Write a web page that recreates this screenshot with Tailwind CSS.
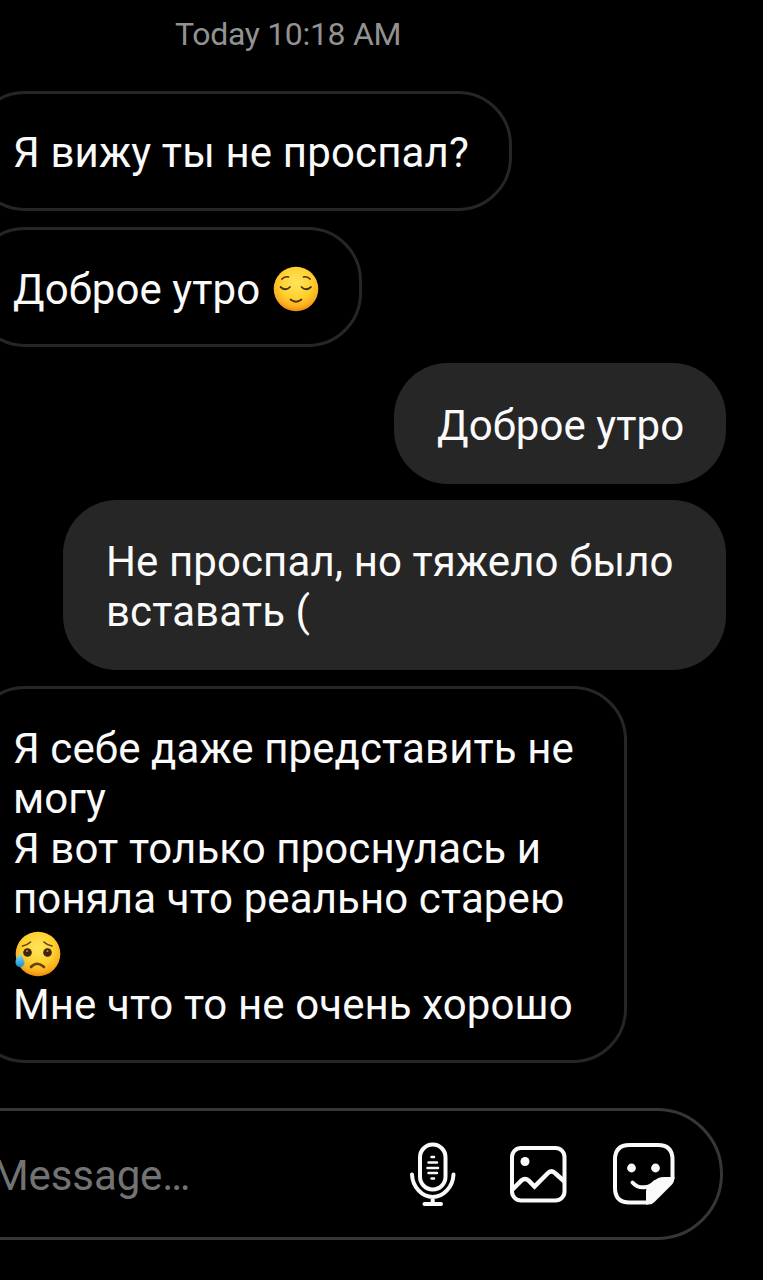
<!DOCTYPE html>
<html lang="ru">
<head>
<meta charset="utf-8">
<title>Chat</title>
<script src="https://cdn.jsdelivr.net/npm/@tailwindcss/browser@4"></script>
</head>
<body class="bg-black">
<main class="w-[763px] h-[1280px] overflow-hidden bg-black flex flex-col font-['Roboto',sans-serif] text-[42px] leading-[50px] tracking-[0.1px] text-[#fafafa] whitespace-nowrap">
  <div class="h-[91px] shrink-0 pl-[175px] pt-[16px] text-[32px] leading-[37px] tracking-[-0.32px] text-[#929292]"><span>Today 10:18 AM</span></div>
  <section class="flex flex-col gap-[16px] shrink-0">
    <div class="-ml-[29px] w-[541px] h-[120px] rounded-[54px] border-[3px] border-[#262626] pl-[39px] pt-[34px]"><span class="tracking-[0.14px]">Я вижу ты не проспал?</span></div>
    <div class="-ml-[29px] w-[391px] h-[120px] rounded-[54px] border-[3px] border-[#262626] pl-[39px] pt-[35px] flex items-start gap-[13px]">
      <span>Доброе утро</span>
      <svg class="w-[46px] h-[46px] mt-[1px]" viewBox="0 0 46 46" fill="none">
        <defs><radialGradient id="face" cx="50%" cy="36%" r="65%"><stop offset="0" stop-color="#ffe45c"/><stop offset=".55" stop-color="#ffd02f"/><stop offset=".82" stop-color="#fbb01f"/><stop offset="1" stop-color="#e8860e"/></radialGradient></defs>
        <circle cx="23" cy="23" r="22.3" fill="url(#face)"/>
        <g stroke="#4a2f12" stroke-width="1.7" stroke-linecap="round"><path d="M9 13Q11.500 10 15.500 11M30.500 11Q34.500 10 37 13"/><path d="M7.500 21Q12.500 25.500 17 21M28.500 21Q33 25.500 38 21M17.500 33.500Q23 38 28.500 33.500"/></g>
      </svg>
    </div>
    <div class="self-end mr-[37px] w-[332px] h-[121px] rounded-[54px] bg-[#262626] pl-[43px] pt-[38px]"><span>Доброе утро</span></div>
    <div class="self-end mr-[37px] w-[663px] h-[170px] rounded-[54px] bg-[#262626] pl-[43px] pt-[37px]"><span>Не проспал, но тяжело было</span><br><span>вставать (</span></div>
    <div class="-ml-[29px] w-[656px] h-[377px] rounded-[54px] border-[3px] border-[#262626] pl-[39px] pt-[35px]">
      <span>Я себе даже представить не</span><br><span>могу</span><br><span>Я вот только проснулась и</span><br><span>поняла что реально старею</span>
      <div class="h-[56px] pl-[2px] pt-[7px]">
        <svg class="w-[46px] h-[46px]" viewBox="0 0 46 46" fill="none">
          <defs><linearGradient id="tear" x2="0" y2="1"><stop stop-color="#8fe2ff"/><stop offset="1" stop-color="#168fce"/></linearGradient></defs>
          <circle cx="23" cy="23" r="22.300" fill="url(#face)"/>
          <g fill="#3f2510"><circle cx="12.500" cy="21.500" r="4.300"/><circle cx="32.500" cy="21.500" r="4.300"/></g>
          <g fill="#bd8b50"><circle cx="12" cy="20" r="1"/><circle cx="32.500" cy="20" r="1"/></g>
          <g stroke="#63400f" stroke-width="1.600" stroke-linecap="round"><path d="M7.500 15Q12.500 14 15.500 11M29 11Q32 14 37 15"/><path d="M16 36Q22 29.500 29 36" stroke-width="2.600"/></g>
          <path d="M5 22C3 26 .5 28 .5 31.500a4.500 4.500 0 0 0 9 0C9.500 28 6.500 26 5 22Z" fill="url(#tear)"/>
        </svg>
      </div>
      <span>Мне что то не очень хорошо</span>
    </div>
  </section>
  <footer class="mt-[45px] -ml-[80px] w-[803px] h-[132px] shrink-0 rounded-[66px] border-[3px] border-[#363636] flex items-center text-[#737373]">
    <span class="ml-[69px] w-[417px] pt-[4px] tracking-[-0.1px]">Message…</span>
    <svg class="w-[48px] h-[66px] shrink-0" viewBox="409 1141 48 66" fill="none" stroke="#fafafa" stroke-linecap="round">
      <rect x="420" y="1144.500" width="25.500" height="45" rx="12.750" stroke-width="4"/>
      <path d="M412 1174.500C412.500 1187 422 1197 432.700 1197S453 1187 453.500 1174.500M432.700 1197v7" stroke-width="4"/>
      <path d="M424.500 1204h16.500" stroke-width="4"/>
      <path d="M431.500 1157h2.500M428.500 1162.500h8.500M427.500 1168h10.500M428.500 1173h8.500M431.500 1178.500h2.500" stroke-width="2.500"/>
    </svg>
    <svg class="ml-[51px] w-[60px] h-[60px] shrink-0" viewBox="508 1144 60 60" fill="none" stroke="#fafafa" stroke-width="4">
      <rect x="512" y="1148" width="52.500" height="52.500" rx="9"/>
      <circle cx="525" cy="1161.500" r="4.500" fill="#fafafa" stroke="none"/>
      <path d="M512.500 1189.500L521.500 1180.500Q525 1177.500 528.500 1180.500L534.500 1186.500L547.500 1173.500Q551.500 1169.500 555.500 1173.500L564.500 1181.500" stroke-width="4.500"/>
    </svg>
    <svg class="ml-[43px] w-[66px] h-[66px] shrink-0" viewBox="611 1141 66 66" fill="none" stroke="#fafafa" stroke-width="4" stroke-linejoin="round">
      <path d="M672.500 1179V1159.500Q672.500 1145 658 1145H629.500Q615 1145 615 1159.500V1188Q615 1202.500 629.500 1202.500H648"/>
      <path d="M674.500 1177H664C656 1177 654 1182 648 1186.500Q646 1188 646 1191V1204.500H649Q652 1204.500 654.500 1202L672 1184.500Q674.500 1182 674.500 1177Z" fill="#fafafa" stroke="none"/>
      <path d="M632.500 1182.500C639 1190 650 1188 655 1182" stroke-linecap="round"/>
      <g fill="#fafafa" stroke="none"><circle cx="631.500" cy="1168" r="4.400"/><circle cx="655.500" cy="1168" r="4.400"/></g>
    </svg>
  </footer>
</main>
</body>
</html>
